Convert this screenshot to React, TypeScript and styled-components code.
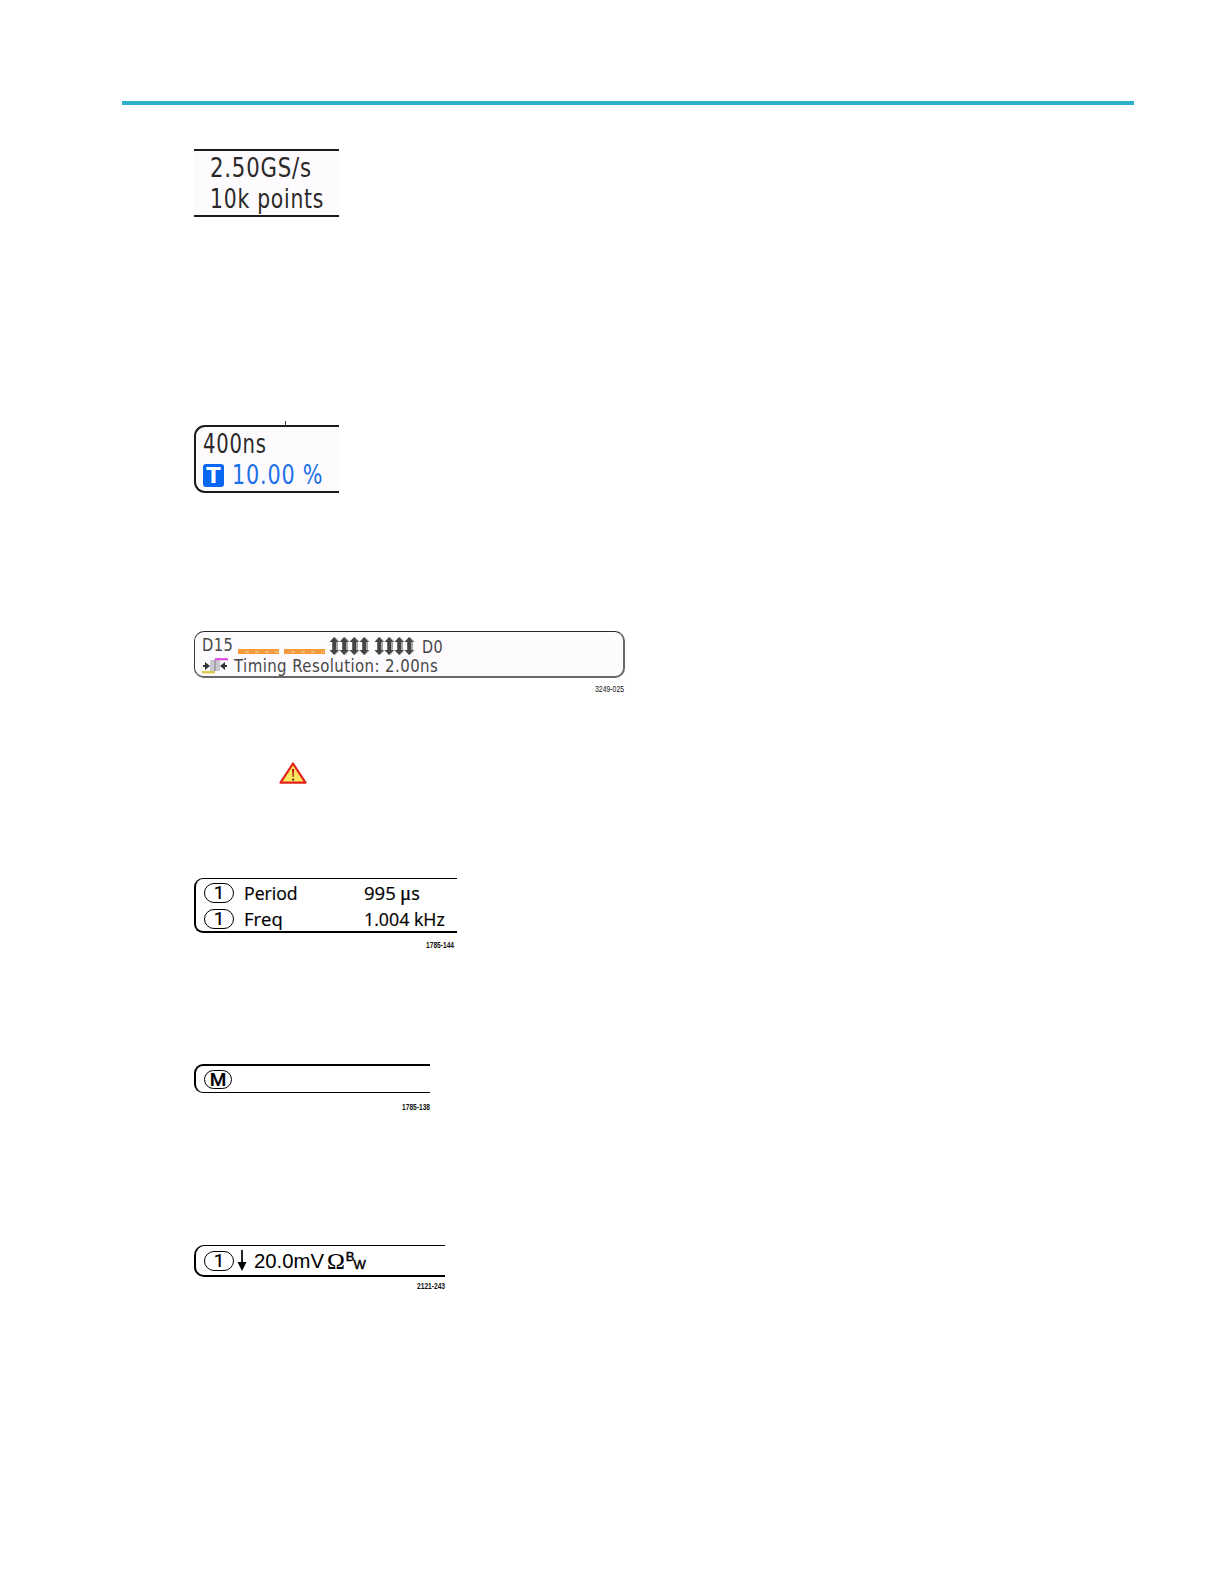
import React, { useLayoutEffect, useRef, useState } from "react";
import styled, { createGlobalStyle } from "styled-components";

type FitProps = {
  width: number;
  children: React.ReactNode;
};

// squeezes a line of text horizontally into the given width
const Fit: React.FC<FitProps> = ({ width, children }) => {
  const ref = useRef<HTMLSpanElement>(null);
  const [scale, setScale] = useState(1);

  useLayoutEffect(() => {
    if (ref.current) {
      setScale(width / ref.current.offsetWidth);
    }
  }, [width]);

  return (
    <FitBox $width={width}>
      <FitText ref={ref} style={{ transform: `scaleX(${scale})` }}>{children}</FitText>
    </FitBox>
  );
};

const Channel: React.FC<{ label: string; width?: number; height?: number; bold?: boolean }> = ({
  label,
  width = 30,
  height = 20,
  bold,
}) => <Pill $width={width} $height={height} $bold={bold}>{label}</Pill>;

const Arrows: React.FC = () => (
  <svg width="41" height="18" viewBox="0 0 41 18">
    {[0, 10, 20, 30].map((x) => (
      <g key={x} transform={`translate(${x} 0)`}>
        <path d="M6 0 L11 5 H9 V13 H11 L6 18 L1 13 H3 V5 H1 Z" fill="#a5a5a5" />
        <path d="M5 0 L9.5 5 H7 V13 H9.5 L5 18 L0.5 13 H3.4 V5 H0.5 Z" fill="#444" />
      </g>
    ))}
  </svg>
);

const TimingIcon: React.FC = () => (
  <svg width="27" height="16" viewBox="0 0 27 16">
    <rect x="8" y="2" width="10" height="11" fill="#c9c9cf" />
    <path d="M13 13 V1.5" stroke="#a7a0ad" strokeWidth="2" />
    <path d="M13 1.2 H26" stroke="#e34be0" strokeWidth="2.2" />
    <path d="M0 14.2 H13" stroke="#e0c63c" strokeWidth="2.2" />
    <path d="M1 8 H4 M22 8 H25" stroke="#333" strokeWidth="2" />
    <path d="M3 4 L8 8 L3 12 Z" fill="#333" />
    <path d="M23 4 L18 8 L23 12 Z" fill="#333" />
  </svg>
);

const WarningIcon: React.FC = () => (
  <svg width="28" height="22" viewBox="0 0 28 22">
    <path d="M14 1.5 L26.5 20.7 H1.5 Z" fill="#fbe85c" stroke="#e3221b" strokeWidth="2.2" strokeLinejoin="round" />
    <path d="M13 7 H15.2 L14.6 15 H13.6 Z" fill="#b5121b" />
    <rect x="13.2" y="16.6" width="1.9" height="2" fill="#5d2418" />
  </svg>
);

const DownArrow: React.FC = () => (
  <svg width="10" height="21" viewBox="0 0 10 21">
    <path d="M5 0 V14" stroke="#000" strokeWidth="1.7" />
    <path d="M0.5 12 H9.5 L5 21 Z" fill="#000" />
  </svg>
);

export const App: React.FC = () => {
  return (
    <Page>
      <GlobalStyle />
      <Rule />

      <RecordReadout>
        <LcdLine $indent={16}><Fit width={102}>2.50GS/s</Fit></LcdLine>
        <LcdLine $indent={16}><Fit width={114}>10k points</Fit></LcdLine>
      </RecordReadout>

      <HorizontalReadout>
        <Tick />
        <LcdLine $indent={7}><Fit width={64}>400ns</Fit></LcdLine>
        <LcdLine $indent={7} $blue>
          <TriggerBadge>T</TriggerBadge>
          <Fit width={91}>10.00 %</Fit>
        </LcdLine>
      </HorizontalReadout>

      <DigitalReadout>
        <DigitalRow>
          <Fit width={31}>D15</Fit>
          <Lows><LowBar /><LowBar /></Lows>
          <Highs><Arrows /><Arrows /></Highs>
          <Lowered><Fit width={21}>D0</Fit></Lowered>
        </DigitalRow>
        <TimingRow>
          <TimingIcon />
          <Fit width={204}>Timing Resolution: 2.00ns</Fit>
        </TimingRow>
      </DigitalReadout>
      <Caption $right={624} $gap={6}><Fit width={29}>3249-025</Fit></Caption>

      <Warning><WarningIcon /></Warning>

      <MeasurementReadout>
        <Measurement>
          <Channel label="1" />
          <Name><Fit width={54}>Period</Fit></Name>
          <Fit width={32}>995</Fit>
          <Unit><Mu>μ</Mu>s</Unit>
        </Measurement>
        <Measurement>
          <Channel label="1" />
          <Name><Fit width={39}>Freq</Fit></Name>
          <Fit width={81}>1.004 kHz</Fit>
        </Measurement>
      </MeasurementReadout>
      <Caption $right={454} $gap={7} $bold><Fit width={28}>1785-144</Fit></Caption>

      <MathReadout>
        <Channel label="M" width={28} height={19} bold />
      </MathReadout>
      <Caption $right={430} $gap={9} $bold><Fit width={28}>1785-138</Fit></Caption>

      <ChannelReadout>
        <Channel label="1" />
        <DownArrow />
        <Scale><Fit width={70}>20.0mV</Fit></Scale>
        <Omega>Ω</Omega>
        <Bandwidth><span>B</span><span>W</span></Bandwidth>
      </ChannelReadout>
      <Caption $right={445} $gap={4} $bold><Fit width={28}>2121-243</Fit></Caption>
    </Page>
  );
};

export default App;

const GlobalStyle = createGlobalStyle`
  * {
    box-sizing: border-box;
  }
  body {
    margin: 0;
    background: #fff;
  }
  svg {
    display: block;
    flex: none;
  }
`;

const Page = styled.main`
  width: 1224px;
  height: 1584px;
  padding-top: 101px;
  overflow: hidden;
  color: #000;
  font-family: "Liberation Sans", Arial, sans-serif;
`;

const FitBox = styled.span<{ $width: number }>`
  display: block;
  flex: none;
  width: ${({ $width }) => $width}px;
  white-space: nowrap;
`;

const FitText = styled.span`
  display: inline-block;
  transform-origin: left center;
`;

const Rule = styled.div`
  width: 1012px;
  height: 4px;
  margin-left: 122px;
  background: #2eafc8;
`;

const Readout = styled.section`
  margin-left: 194px;
  border: 0 solid #000;
`;

const RecordReadout = styled(Readout)`
  width: 145px;
  height: 68px;
  margin-top: 44px;
  border-width: 2px 0;
  border-color: #1c1a1c;
  background: #fdfbfe;
`;

const HorizontalReadout = styled(Readout)`
  position: relative;
  width: 145px;
  height: 68px;
  margin-top: 208px;
  border-width: 2px 0 2px 2px;
  border-color: #1c1a1c;
  border-radius: 11px 0 0 11px;
  background: #fdfbfe;
`;

const Tick = styled.i`
  position: absolute;
  top: -6px;
  left: 89px;
  width: 1px;
  height: 4px;
  background: #444;
`;

const LcdLine = styled.div<{ $indent: number; $blue?: boolean }>`
  display: flex;
  align-items: center;
  height: 31px;
  padding-top: 3px;
  padding-left: ${({ $indent }) => $indent}px;
  color: ${({ $blue }) => ($blue ? "#1a70e8" : "#2a2828")};
  font: 400 26px/31px "DejaVu Sans", "Noto Sans", sans-serif;
  letter-spacing: 1px;
`;

const TriggerBadge = styled.b`
  flex: none;
  width: 21px;
  height: 23px;
  margin-right: 8px;
  border-radius: 3px;
  background: #0867f2;
  color: #fff;
  font: 700 21px/24px "DejaVu Sans", sans-serif;
  letter-spacing: 0;
  text-align: center;
`;

const DigitalReadout = styled(Readout)`
  width: 431px;
  height: 47px;
  padding: 1px 0 0 7px;
  margin-top: 138px;
  border-width: 1px 2px 2px 1px;
  border-color: #2a292b #68676a #68676a #3a393b;
  border-radius: 10px;
  background: #fdfbfe;
  color: #484848;
  font: 400 18.5px/23px "DejaVu Sans", "Noto Sans", sans-serif;
  letter-spacing: 0.5px;
`;

const DigitalRow = styled.div`
  display: flex;
  height: 22px;
`;

const Lows = styled.div`
  display: flex;
  gap: 5px;
  padding: 16px 0 0 5px;
`;

const LowBar = styled.i`
  width: 41px;
  height: 5px;
  border: 0 solid #f79a3c;
  border-width: 2px 1px 1px;
  background: repeating-linear-gradient(90deg, #f59a3c 0 6px, #fbb871 6px 10px);
`;

const Highs = styled.div`
  display: flex;
  gap: 4px;
  padding: 4px 0 0 4px;
`;

const Lowered = styled.div`
  padding: 2px 0 0 7px;
`;

const TimingRow = styled.div`
  display: flex;
  align-items: center;
  gap: 5px;
  height: 21px;
  line-height: 21px;
`;

const Caption = styled.div<{ $right: number; $gap: number; $bold?: boolean }>`
  display: flex;
  justify-content: flex-end;
  width: ${({ $right }) => $right}px;
  height: 10px;
  margin-top: ${({ $gap }) => $gap}px;
  color: #111;
  font-size: 9px;
  font-weight: ${({ $bold }) => ($bold ? 700 : 400)};
  line-height: 10px;
`;

const Warning = styled.div`
  height: 22px;
  margin: 68px 0 0 279px;
`;

const Pill = styled.span<{ $width: number; $height: number; $bold?: boolean }>`
  flex: none;
  width: ${({ $width }) => $width}px;
  height: ${({ $height }) => $height}px;
  border: 1px solid #000;
  border-radius: 10px;
  font-family: Roboto, "Liberation Sans", sans-serif;
  font-size: 19px;
  font-weight: ${({ $bold }) => ($bold ? 500 : 400)};
  line-height: ${({ $height }) => $height - 2}px;
  text-align: center;
  -webkit-text-stroke: 0.2px #000;
`;

const MeasurementReadout = styled(Readout)`
  width: 263px;
  height: 55px;
  padding: 3px 0 0 8px;
  margin-top: 94px;
  border-width: 1px 0 2px 2px;
  border-radius: 9px 0 0 9px;
`;

const Measurement = styled.div`
  display: flex;
  align-items: center;
  height: 26px;
  padding-bottom: 4px;
  font: 400 18px/24px "Open Sans", "Noto Sans", sans-serif;
  -webkit-text-stroke: 0.2px #000;
`;

const Name = styled.div`
  width: 130px;
  padding-left: 10px;
`;

const Unit = styled.span`
  margin-left: 4px;
`;

const Mu = styled.span`
  font-family: "Liberation Serif", "Times New Roman", serif;
  font-size: 21px;
  line-height: 20px;
`;

const MathReadout = styled(Readout)`
  display: flex;
  align-items: center;
  width: 236px;
  height: 29px;
  padding-left: 8px;
  margin-top: 114px;
  border-width: 2px 0 1px 2px;
  border-radius: 9px 0 0 9px;
`;

const ChannelReadout = styled(Readout)`
  display: flex;
  align-items: center;
  width: 251px;
  height: 32px;
  padding-left: 8px;
  margin-top: 133px;
  border-width: 1px 0 2px 2px;
  border-radius: 10px 0 0 10px;
  font-size: 20px;
  line-height: 28px;

  svg {
    margin-left: 3px;
  }
`;

const Scale = styled.div`
  padding-left: 7px;
`;

const Omega = styled.span`
  margin-left: 3px;
  font-family: "Liberation Serif", "Times New Roman", serif;
  font-size: 24px;
  -webkit-text-stroke: 0.2px #000;
`;

const Bandwidth = styled.span`
  display: flex;
  font-size: 13px;
  line-height: 13px;
  -webkit-text-stroke: 0.5px #000;

  span:first-child {
    padding-bottom: 9px;
    margin-left: 1px;
  }

  span:last-child {
    padding-top: 8px;
    margin-left: -1px;
  }
`;
